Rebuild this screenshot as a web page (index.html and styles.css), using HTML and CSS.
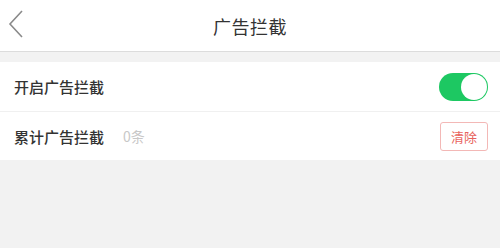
FILE: index.html
```html
<!DOCTYPE html>
<html>
<head>
<meta charset="utf-8">
<link rel="stylesheet" href="styles.css">
</head>
<body>
<div class="header">
  <svg class="back" width="16" height="28" viewBox="0 0 16 28"><polyline points="14,1 2,14 14,27" fill="none" stroke="#8a8a8a" stroke-width="1.6"/></svg>
  <div class="title">广告拦截</div>
</div>
<div class="list">
  <div class="row">
    <span class="label">开启广告拦截</span>
    <div class="toggle"><div class="knob"></div></div>
  </div>
  <div class="row">
    <span class="label">累计广告拦截</span>
    <span class="count">0条</span>
    <div class="btn">清除</div>
  </div>
</div>
</body>
</html>
```
FILE: styles.css
```css
html, body {
  margin: 0;
  padding: 0;
  background: #f2f2f2;
  font-family: "Noto Sans CJK SC", "Noto Sans", sans-serif;
  width: 500px;
  height: 248px;
  overflow: hidden;
}
.header {
  position: relative;
  height: 51px;
  background: #fff;
  border-bottom: 1px solid #dcdcdc;
  display: flex;
  align-items: center;
  justify-content: center;
}
.back {
  position: absolute;
  left: 8px;
  top: 10px;
}
.title {
  font-size: 18px;
  color: #333;
  letter-spacing: 0.5px;
}
.list {
  margin-top: 10px;
  background: #fff;
}
.row {
  height: 49px;
  display: flex;
  align-items: center;
  padding: 0 12px 0 14px;
}
.row + .row {
  height: 48px;
  border-top: 1px solid #f0f0f0;
}
.label {
  font-size: 15px;
  font-weight: 500;
  color: #333;
}
.count {
  font-size: 14px;
  color: #c8c8c8;
  margin-left: 19px;
}
.toggle {
  margin-left: auto;
  width: 49px;
  height: 28px;
  border-radius: 14px;
  background: #1dc862;
  position: relative;
}
.knob {
  position: absolute;
  right: 1px;
  top: 1px;
  width: 26px;
  height: 26px;
  border-radius: 50%;
  background: #fff;
}
.btn {
  margin-left: auto;
  width: 46px;
  height: 27px;
  border: 1px solid #f3b8b6;
  border-radius: 3px;
  color: #e8625c;
  font-size: 13px;
  display: flex;
  align-items: center;
  justify-content: center;
  box-sizing: content-box;
}
```
